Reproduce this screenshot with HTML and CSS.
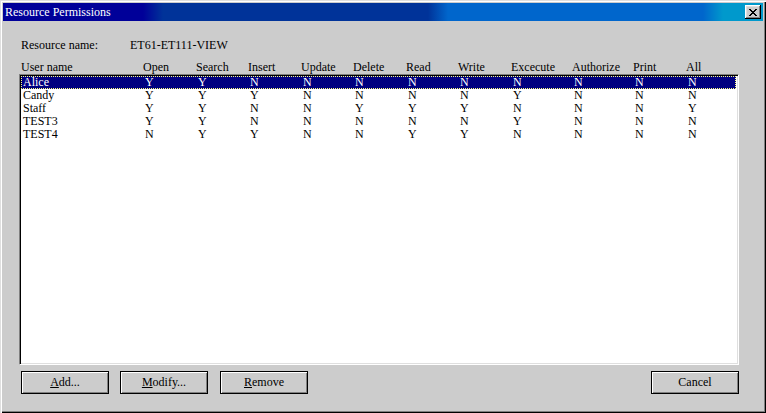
FILE: index.html
```html
<!DOCTYPE html>
<html lang="en">
<head>
    <meta charset="UTF-8">
    <title>Resource Permissions</title>
    <link rel="stylesheet" href="styles.css">
</head>
<body>
    <div class="window">
        <div class="titlebar">
            <span class="title">Resource Permissions</span>
            <button class="close-btn" aria-label="Close">
                <svg width="8" height="7" viewBox="0 0 8 7">
                    <path d="M0 0h2v1h1v1h2v-1h1v-1h2v1h-1v1h-1v1h-1v1h1v1h1v1h1v1h-2v-1h-1v-1h-2v1h-1v1h-2v-1h1v-1h1v-1h1v-1h-1v-1h-1v-1h-1z" fill="#000"/>
                </svg>
            </button>
        </div>
        <div class="content">
            <div class="resource">
                <span class="label">Resource name:</span>
                <span class="value">ET61-ET111-VIEW</span>
            </div>
            <div class="grid head">
                <span>User name</span><span>Open</span><span>Search</span><span>Insert</span><span>Update</span><span>Delete</span><span>Read</span><span>Write</span><span>Excecute</span><span>Authorize</span><span>Print</span><span>All</span>
            </div>
            <div class="listbox" id="list"></div>
            <div class="buttons">
                <button class="btn"><u>A</u>dd...</button>
                <button class="btn"><u>M</u>odify...</button>
                <button class="btn"><u>R</u>emove</button>
                <span class="spacer"></span>
                <button class="btn">Cancel</button>
            </div>
        </div>
    </div>
    <script>
        // user permissions: open, search, insert, update, delete, read, write, execute, authorize, print, all
        const users = [
            ["Alice", "YYNNNNNNNNN"],
            ["Candy", "YYYNNNNYNNN"],
            ["Staff", "YYNNYYYNNNY"],
            ["TEST3", "YYNNNNNYNNN"],
            ["TEST4", "NYYNNYYNNNN"]
        ];

        const list = document.getElementById('list');
        users.forEach((u, i) => {
            const row = document.createElement('div');
            row.className = 'grid row' + (i === 0 ? ' selected' : '');
            const name = document.createElement('span');
            name.textContent = u[0];
            row.appendChild(name);
            u[1].split('').forEach(v => {
                const cell = document.createElement('span');
                cell.textContent = v;
                row.appendChild(cell);
            });
            list.appendChild(row);
        });
    </script>
</body>
</html>
```
FILE: styles.css
```css
/* Reset */
body, button, span, div {
    margin: 0;
    padding: 0;
    box-sizing: border-box;
}

body {
    font-family: 'Liberation Serif', 'Times New Roman', serif;
    font-size: 12px;
    line-height: 14px;
    color: #000;
    background: #ccc;
}

/* Window frame */
.window {
    width: 766px;
    height: 413px;
    padding: 3px;
    background: #ccc;
    box-shadow: inset 1px 1px #dfdfdf, inset 2px 2px #fff, inset -1px -1px #000, inset -2px -2px #808080;
}

.titlebar {
    height: 18px;
    display: flex;
    align-items: center;
    justify-content: space-between;
    padding: 0 2px 0 2px;
    background: linear-gradient(to right, #000099 0, #000099 140px, #003399 160px, #003399 425px, #0066cc 445px, #0066cc 700px, #0099cc 720px);
    color: #fff;
}

.title {
    line-height: 16px;
}

.close-btn {
    width: 16px;
    height: 14px;
    display: flex;
    align-items: center;
    justify-content: center;
    background: #ccc;
    border: none;
    box-shadow: inset -1px -1px #000, inset 1px 1px #fff, inset -2px -2px #808080, inset 2px 2px #dfdfdf;
}

/* Body */
.content {
    padding: 0 24px 0 16px;
}

.resource {
    margin-top: 17px;
    padding-left: 2px;
    display: flex;
}

.resource .label {
    width: 109px;
}

.grid {
    display: grid;
    grid-template-columns: 122px 53px 52px 53px 52px 53px 52px 53px 61px 61px 53px 1fr;
    white-space: nowrap;
}

.head {
    margin-top: 8px;
    padding-left: 2px;
}

/* List box */
.listbox {
    height: 291px;
    background: #fff;
    border-top: 1px solid #808080;
    border-left: 1px solid #808080;
    border-right: 1px solid #fff;
    border-bottom: 1px solid #fff;
    box-shadow: inset 1px 1px #000, inset -1px -1px #dfdfdf;
    padding: 1px 2px 1px 1px;
}

.row {
    height: 13px;
    line-height: 12px;
    padding-left: 2px;
}

.row.selected {
    background: #000080;
    color: #fff;
    border: 1px dotted #ffff80;
    padding-left: 1px;
    line-height: 11px;
}

/* Buttons */
.buttons {
    display: flex;
    margin-top: 6px;
    padding-left: 2px;
}

.btn {
    width: 88px;
    height: 23px;
    margin-right: 11px;
    font-family: inherit;
    font-size: 12px;
    background: #ccc;
    border: 1px solid #000;
    box-shadow: inset 1px 1px #fff, inset -1px -1px #808080;
    color: #000;
}

.btn:nth-child(2) {
    margin-right: 12px;
}

.btn:last-child {
    margin-right: 0;
}

.spacer {
    flex: 1;
}
```
